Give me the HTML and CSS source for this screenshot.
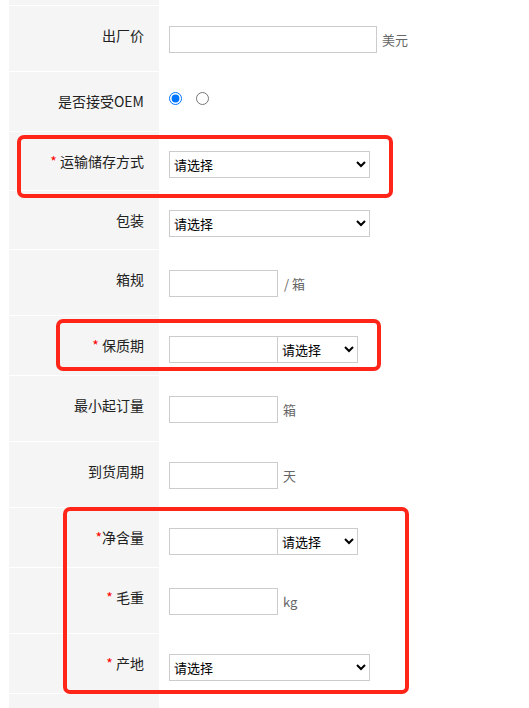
FILE: index.html
```html
<!DOCTYPE html>
<html lang="zh-CN">
<head>
    <meta charset="UTF-8">
    <meta name="viewport" content="width=device-width, initial-scale=1.0">
    <title>商品信息</title>
    <link rel="stylesheet" href="styles.css">
</head>
<body>
<div class="form">
    <div class="row row-top"><div class="label"></div><div class="field"></div></div>

    <div class="row">
        <div class="label">出厂价</div>
        <div class="field"><input class="text wide" type="text"><span class="unit">美元</span></div>
    </div>
    <div class="row row-60">
        <div class="label">是否接受OEM</div>
        <div class="field">
            <input class="radio" type="radio" name="oem" checked>
            <input class="radio" type="radio" name="oem">
        </div>
    </div>
    <div class="row row-59">
        <div class="label"><span class="req">*</span> 运输储存方式</div>
        <div class="field field-sel"><select class="sel full"><option>请选择</option></select></div>
    </div>
    <div class="row row-59">
        <div class="label">包装</div>
        <div class="field field-sel"><select class="sel full"><option>请选择</option></select></div>
    </div>
    <div class="row">
        <div class="label">箱规</div>
        <div class="field"><input class="text short" type="text"><span class="unit unit-gap">/ 箱</span></div>
    </div>
    <div class="row row-60">
        <div class="label"><span class="req">*</span> 保质期</div>
        <div class="field"><input class="text short" type="text"><select class="sel small"><option>请选择</option></select></div>
    </div>
    <div class="row">
        <div class="label">最小起订量</div>
        <div class="field"><input class="text short" type="text"><span class="unit">箱</span></div>
    </div>
    <div class="row">
        <div class="label">到货周期</div>
        <div class="field"><input class="text short" type="text"><span class="unit">天</span></div>
    </div>
    <div class="row row-60">
        <div class="label"><span class="req">*</span>净含量</div>
        <div class="field"><input class="text short" type="text"><select class="sel small"><option>请选择</option></select></div>
    </div>
    <div class="row">
        <div class="label">
            <span class="req">*</span> 毛重</div>
        <div class="field"><input class="text short" type="text"><span class="unit">kg</span></div>
    </div>
    <div class="row row-60">
        <div class="label"><span class="req">*</span> 产地</div>
        <div class="field"><select class="sel full"><option>请选择</option></select></div>
    </div>
    <div class="row row-end"><div class="label"></div><div class="field"></div></div>
</div>

<!-- 标注框 -->
<div class="mark mark-transport"></div>
<div class="mark mark-shelf"></div>
<div class="mark mark-weight"></div>
</body>
</html>
```

FILE: styles.css
```css
body {
    margin: 0;
    padding: 0 0 0 9px;
    font-family: "Noto Sans CJK SC", "Liberation Sans", sans-serif;
    font-size: 14px;
    color: #222;
    background-color: #fff;
    overflow: hidden;
}

.row {
    display: flex;
    height: 66px;
}

.row-60 {
    height: 60px;
}

.row-59 {
    height: 59px;
}

.row-top {
    height: 5px;
}

.row-end {
    height: 15px;
}

.label {
    box-sizing: border-box;
    width: 150px;
    flex-shrink: 0;
    padding: 19px 15px 0 0;
    border-top: 1px solid #fff;
    background-color: #f5f5f5;
    text-align: right;
    line-height: 20px;
    white-space: nowrap;
}

.row-top .label {
    border-top: none;
    padding: 0;
}

.req {
    color: #f00;
}

.field {
    display: flex;
    align-items: center;
    align-self: flex-start;
    padding: 21px 0 0 10px;
}

.row-end .field {
    padding: 0;
}

.field-sel {
    padding-top: 20px;
}

.text,
.sel {
    box-sizing: border-box;
    height: 27px;
    margin: 0;
    border: 1px solid #ccc;
    border-radius: 0;
    background-color: #fff;
    font-family: inherit;
    font-size: 13px;
    color: #000;
    outline: none;
}

.text {
    padding: 0 4px;
}

.wide {
    width: 208px;
}

.short {
    width: 109px;
}

.sel {
    padding: 0;
}

.full {
    width: 201px;
}

.small {
    width: 81px;
    margin-left: -1px;
}

.unit {
    margin-left: 5px;
    font-size: 13px;
    color: #666;
}

.unit-gap {
    margin-left: 6px;
}

.radio {
    width: 13px;
    height: 13px;
    margin: 0 14px 0 0;
}

/* 红色标注框 */
.mark {
    position: absolute;
    box-sizing: border-box;
    border: 4px solid #ff2519;
    border-radius: 7px;
}

.mark-transport {
    left: 17px;
    top: 135px;
    width: 376px;
    height: 63px;
}

.mark-shelf {
    left: 56px;
    top: 319px;
    width: 325px;
    height: 52px;
}

.mark-weight {
    left: 63px;
    top: 507px;
    width: 346px;
    height: 187px;
}
```
